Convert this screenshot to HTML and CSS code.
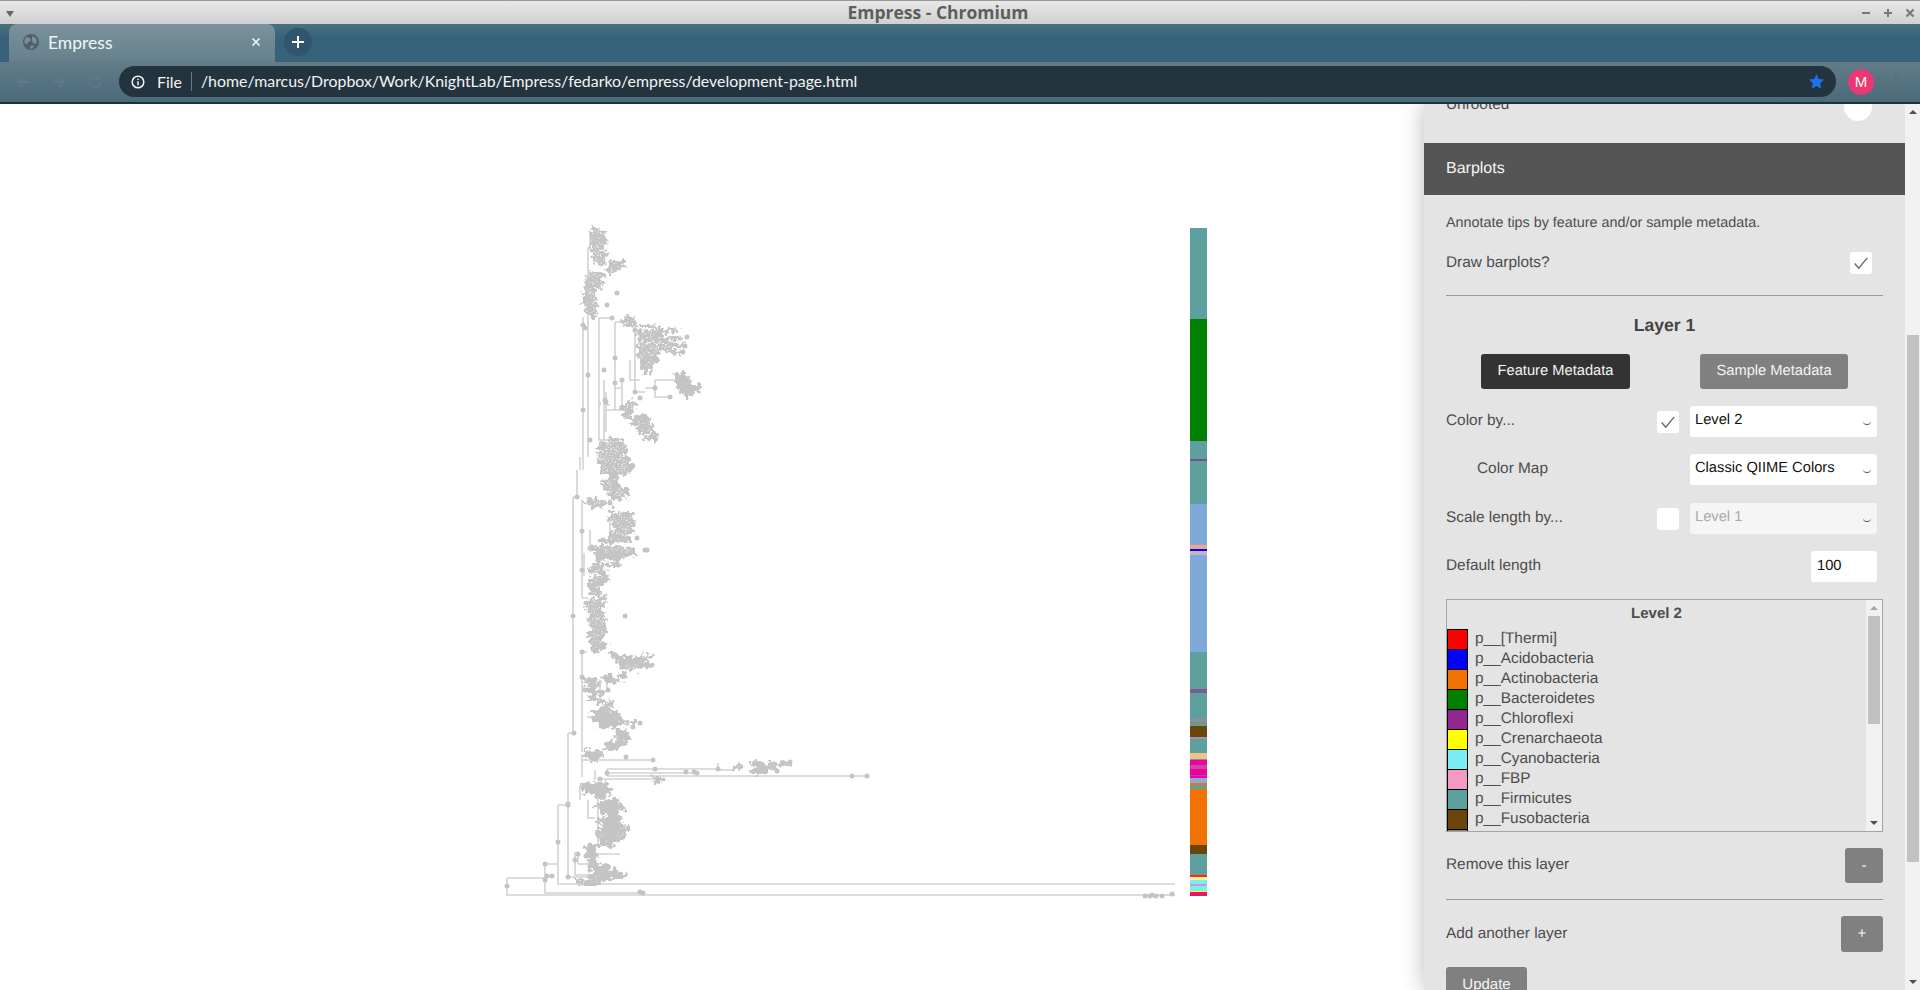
FILE: index.html
```html
<!DOCTYPE html>
<html>
<head>
  <meta charset="utf-8">
  <title>Empress - Chromium</title>
  <link rel="stylesheet" href="styles.css">
</head>
<body>
  <header class="titlebar">
    <span class="wm-menu"></span>
    <span class="wm-title">Empress - Chromium</span>
    <span class="wm-buttons">
      <svg width="12" height="12" viewBox="0 0 12 12"><path d="M2 6h8"/></svg>
      <svg width="12" height="12" viewBox="0 0 12 12"><path d="M2 6h8M6 2v8"/></svg>
      <svg width="12" height="12" viewBox="0 0 12 12"><path d="M2.5 2.5l7 7M9.5 2.5l-7 7"/></svg>
    </span>
  </header>

  <div class="tabstrip">
    <div class="tab">
      <svg class="favicon" width="16" height="16" viewBox="0 0 16 16">
        <circle cx="8" cy="8" r="8" fill="#4d5f69"/>
        <path d="M3 3l4 1 1 3-3 1-1 3-3-3zM9 2l4 2 1 5-3 1-2-3zM8 11l3 1-2 3-2-1z" fill="#7c8f99"/>
      </svg>
      <span class="tab-name">Empress</span>
      <svg class="tab-close" width="10" height="10" viewBox="0 0 10 10"><path d="M1.5 1.5l7 7M8.500 1.500l-7 7"/></svg>
    </div>
    <div class="newtab">
      <svg width="14" height="14" viewBox="0 0 14 14"><path d="M7 1v12M1 7h12"/></svg>
    </div>
  </div>

  <div class="toolbar">
    <svg class="nav" width="18" height="18" viewBox="0 0 18 18"><path d="M15 9H4M9 4L4 9l5 5"/></svg>
    <svg class="nav" width="18" height="18" viewBox="0 0 18 18"><path d="M3 9h11M9 4l5 5-5 5"/></svg>
    <svg class="nav" width="18" height="18" viewBox="0 0 18 18"><path d="M14.500 9A5.500 5.500 0 1 1 13 5.200M14 2v4h-4"/></svg>
    <div class="omnibox">
      <svg class="info" width="14" height="14" viewBox="0 0 14 14">
        <circle cx="7" cy="7" r="5.800"/>
        <path d="M7 6.200V10.300M7 3.700v1.300"/>
      </svg>
      <span class="scheme">File</span>
      <span class="url">/home/marcus/Dropbox/Work/KnightLab/Empress/fedarko/empress/development-page.html</span>
      <svg class="star" width="17" height="17" viewBox="0 0 18 18"><path d="M9 1l2.400 5.400 5.800.6-4.400 3.900 1.300 5.800L9 13.700l-5.100 3 1.300-5.800L.8 7l5.800-.6z"/></svg>
    </div>
    <div class="avatar">M</div>
    <div class="dots"><i></i><i></i><i></i></div>
  </div>

  <main class="page">
    <div class="canvas">
      <svg class="tree" width="1424" height="886" viewBox="0 104 1424 886">
        <defs>
          <!-- shakes the tip dots out of their rows -->
          <filter id="scatter" x="0" y="0" width="100%" height="100%" filterUnits="userSpaceOnUse" primitiveUnits="userSpaceOnUse">
            <feTurbulence type="fractalNoise" baseFrequency=".22" numOctaves="2" seed="7" result="n"/>
            <feDisplacementMap in="SourceGraphic" in2="n" scale="11" xChannelSelector="R" yChannelSelector="G"/>
          </filter>
        </defs>
        <!-- branches -->
        <path class="branch" d="M507 878V895H1175M507 878H545M545 864V893H643M545 864H558M558 805V884H1175M558 805H568
          M568 733V877H590M568 733H575M573 497V733M573 497H577M577 470V497M580 457V470
          M583 317V470M588 247V457M590 230V250M599 318V440H615M599 318H612M604 380V440
          M615 322V410M615 322H627M635 323V392H645M645 388H655M655 380H673M655 380V397H670
          M622 380V405M630 360V380H640M615 388H622M607 410H622M606 392V432M610 405H606M600 402V405
          M582 500V530M582 530V598M582 598H588M584 553V576M590 530V552M603 545V560M610 522V550M607 520H620
          M582 652V717M587 717H596M587 750V755H600M582 717V752M582 652H587M600 680V700M607 675V690
          M582 755V777M582 760H653M595 770V780M607 769V776M607 769H718M607 773H697M607 776H867M718 763V770H735M718 770H735M600 779H663
          M580 785V800M588 800V818H595M598 798V845M588 845V858M575 852V875H590M578 854V864M578 864H592M592 854H620
          M590 880H607M558 884H590"/>
        <!-- dense clusters of tips -->
        <path class="tips" filter="url(#scatter)" d="M593 229H600L604 233H592L590 237H603L606 241H591L592 245H604L600 249H591L594 253H607L605 257H593L596 261H606L602 265H598
          M609 268H618L622 262H612L608 271M612 266H624L627 267M610 272H617
          M592 274H603L601 278H587L585 282H602L600 286H586L584 290H595L594 294H585L586 298H596L594 302H586L583 306H595L596 310H585L589 314H596L592 318H597
          M623 321H636M627 318H633M626 325H635
          M642 326H652L660 328L661 332H640L638 336H662L666 330H680M640 340H668L680 338M639 345H675L685 346M640 349H668L672 352H683M640 353H660M639 357H656L658 360H644L642 364H654L650 367H642L644 371H650
          M676 374H684L674 378H688L675 382H692L678 386H698L701 387L680 390H698L683 394H692L686 397H690
          M627 402H632L636 406H624L622 410H634L630 414H624L627 418H638L645 417L648 420H631L634 424H650L652 428H637L640 432H655L657 437H644L648 439H655
          M610 440H620L624 444H600L597 448H625L626 452H605L598 456H622L628 460H600L597 464H630L632 468H600
          M603 472H625L630 470M606 474H620L610 478H618M603 482H615L618 486H604L606 490H628L626 494H608L610 498H625
          M584 502H600L608 504M590 499H597M588 506H605
          M612 510H616M620 513H630L633 516H610L608 520H632L634 524H612L615 528H630L632 532H612L610 536H624L626 540H608
          M600 541H626L632 538M590 548H634M596 552H638M597 555H636M600 558H620L615 562H622M605 565H618
          M594 564H600L602 568H592L590 572H604L608 578H590L592 582H606L596 586H590L592 590H602L596 594H590
          M600 596H606L603 600H590L586 604H604L601 608H587L589 612H602L604 616H590L588 620H604L606 624H590L592 628H604L607 632H590L589 636H604L600 640H590L593 644H606L602 648H592L595 652H600
          M610 653H616L612 657H622L617 661H640L650 655H656M620 658H644L646 664H618L625 668H640L646 665L655 665
          M605 677H612L608 681H616L620 674H627L625 678H614
          M584 680H596L587 684H600L590 688H595L586 692H604L592 696H597L590 700H600
          M600 702H612L606 706H614L592 712H618L593 716H620L594 720H622L598 726H618
          M600 722H636M616 731H624L614 735H628L618 739H629L606 745H626L604 749H620
          M584 752H600L586 756H602L590 760H596
          M736 767H744M752 763H764L756 767H776L750 771H768L752 773H764M770 764H788
          M653 778H664L655 782H662
          M584 784H606L580 788H608L585 792H610L595 795H607
          M596 797H602L608 801H620L598 805H622L600 809H625L602 813H618L608 817H622L596 821H618L602 825H624L600 829H628L598 833H626L596 837H624L600 841H620L596 845H610
          M586 847H595L587 851H597L586 855H594L590 859H596L588 863H598
          M590 866H610L592 870H618L594 874H626L600 877H624L590 877
          M577 881H605L586 884H596L578 888H592L576 892H584"/>
        <!-- lone nodes -->
        <path class="nodes" d="M507 886h0M545 864h0M545 880h0M558 842h0M568 805h0M573 616h0M577 497h0M583 325h0M583 410h0M588 297h0M588 375h0
          M617 293h0M607 305h0M612 318h0M615 358h0M615 383h0M635 330h0M635 392h0M687 337h0M685 346h0M683 352h0M670 397h0M655 388h0M640 398h0
          M604 370h0M606 402h0M622 380h0M605 400h0M590 440h0M585 328h0
          M582 531h0M582 570h0M592 547h0M594 590h0M598 560h0M610 503h0M645 550h0M637 538h0M618 565h0M625 616h0M647 550h0M603 540h0
          M582 652h0M582 677h0M585 690h0M608 690h0M640 723h0M633 727h0M653 760h0M626 757h0M655 769h0M718 769h0M607 773h0M697 773h0M852 776h0M867 776h0
          M686 772h0M694 772h0M777 771h0M790 762h0M784 763h0M600 779h0M574 733h0M568 804h0M575 860h0M578 854h0M590 845h0M586 856h0
          M568 877h0M552 876h0M547 876h0M590 877h0M643 893h0M640 892h0M1150 896h0M1156 896h0M1162 896h0M1152 895h0M1172 894h0M1145 896h0"/>
        <!-- barplot, layer 1 -->
        <g class="bar">
          <rect x="1190" y="228" width="17" height="91" fill="#5da09e"/>
          <rect x="1190" y="319" width="17" height="122" fill="#008000"/>
          <rect x="1190" y="441" width="17" height="63" fill="#5da09e"/>
          <rect x="1190" y="459" width="17" height="2" fill="#91278d" opacity=".7"/>
          <rect x="1190" y="504" width="17" height="148" fill="#7fa9d9"/>
          <rect x="1190" y="545" width="17" height="4" fill="#f4a582"/>
          <rect x="1190" y="549" width="17" height="2" fill="#0000ff"/>
          <rect x="1190" y="551" width="17" height="4" fill="#bbbbbb"/>
          <rect x="1190" y="652" width="17" height="126" fill="#5da09e"/>
          <rect x="1190" y="689" width="17" height="4" fill="#7d5b8f"/>
          <rect x="1190" y="719" width="17" height="2" fill="#a87fb0"/>
          <rect x="1190" y="722" width="17" height="2" fill="#8f8f5a"/>
          <rect x="1190" y="726" width="17" height="11" fill="#6b440b"/>
          <rect x="1190" y="737" width="17" height="2" fill="#a88fb0"/>
          <rect x="1190" y="753" width="17" height="6" fill="#f5c08a"/>
          <rect x="1190" y="760" width="17" height="5" fill="#f0009a"/>
          <rect x="1190" y="765" width="17" height="4" fill="#c848a8"/>
          <rect x="1190" y="769" width="17" height="9" fill="#f0009a"/>
          <rect x="1190" y="775" width="17" height="1" fill="#b040b0"/>
          <rect x="1190" y="778" width="17" height="5" fill="#8fa5dc"/>
          <rect x="1190" y="783" width="17" height="2" fill="#f27304"/>
          <rect x="1190" y="785" width="17" height="4" fill="#5da09e"/>
          <rect x="1190" y="789" width="17" height="56" fill="#f27304"/>
          <rect x="1190" y="845" width="17" height="9" fill="#6b440b"/>
          <rect x="1190" y="854" width="17" height="21" fill="#5da09e"/>
          <rect x="1190" y="875" width="17" height="2" fill="#ff2a10"/>
          <rect x="1190" y="877" width="17" height="3" fill="#f7f2a0"/>
          <rect x="1190" y="880" width="17" height="4" fill="#7cecf4"/>
          <rect x="1190" y="884" width="17" height="2" fill="#c89ad8"/>
          <rect x="1190" y="886" width="17" height="5" fill="#7cecf4"/>
          <rect x="1190" y="891" width="17" height="1" fill="#ffff00"/>
          <rect x="1190" y="892" width="17" height="4" fill="#f0106a"/>
        </g>
      </svg>
    </div>

    <aside class="panel">
      <div class="layout-row">
        <span class="unrooted">Unrooted</span>
        <span class="toggle"></span>
      </div>

      <h3 class="panel-head">Barplots</h3>

      <div class="panel-body">
        <p class="hint">Annotate tips by feature and/or sample metadata.</p>
        <div class="row draw-row">
          <span class="lbl">Draw barplots?</span>
          <span class="check on"><svg width="16" height="16" viewBox="0 0 14 14"><path d="M1.500 7.500l3.500 4L12.500 2.500"/></svg></span>
        </div>
        <hr class="rule">

        <h4 class="layer-title">Layer 1</h4>
        <div class="tabs">
          <button class="btn dark">Feature Metadata</button>
          <button class="btn">Sample Metadata</button>
        </div>

        <div class="row field">
          <span class="lbl">Color by...</span>
          <span class="check on"><svg width="16" height="16" viewBox="0 0 14 14"><path d="M1.500 7.500l3.500 4L12.500 2.500"/></svg></span>
          <div class="select"><select><option>Level 2</option></select></div>
        </div>
        <div class="row field">
          <span class="lbl indent">Color Map</span>
          <div class="select"><select><option>Classic QIIME Colors</option></select></div>
        </div>
        <div class="row field">
          <span class="lbl">Scale length by...</span>
          <span class="check"></span>
          <div class="select off"><select disabled><option>Level 1</option></select></div>
        </div>
        <div class="row field">
          <span class="lbl">Default length</span>
          <input class="num" type="text" value="100">
        </div>

        <div class="legend">
          <div class="legend-list">
            <div class="legend-title">Level 2</div>
            <div class="legend-row"><i class="swatch" style="background:#ff0000"></i>p__[Thermi]</div>
            <div class="legend-row"><i class="swatch" style="background:#0000ff"></i>p__Acidobacteria</div>
            <div class="legend-row"><i class="swatch" style="background:#f27304"></i>p__Actinobacteria</div>
            <div class="legend-row"><i class="swatch" style="background:#008000"></i>p__Bacteroidetes</div>
            <div class="legend-row"><i class="swatch" style="background:#91278d"></i>p__Chloroflexi</div>
            <div class="legend-row"><i class="swatch" style="background:#ffff00"></i>p__Crenarchaeota</div>
            <div class="legend-row"><i class="swatch" style="background:#7cecf4"></i>p__Cyanobacteria</div>
            <div class="legend-row"><i class="swatch" style="background:#f49ac2"></i>p__FBP</div>
            <div class="legend-row"><i class="swatch" style="background:#5da09e"></i>p__Firmicutes</div>
            <div class="legend-row"><i class="swatch" style="background:#6b440b"></i>p__Fusobacteria</div>
            <div class="legend-row"><i class="swatch" style="background:#808080"></i>p__GN02</div>
          </div>
          <div class="legend-scroll">
            <i class="arrow up"></i>
            <div class="thumb"></div>
            <i class="arrow down"></i>
          </div>
        </div>

        <div class="row remove-row">
          <span class="lbl">Remove this layer</span>
          <button class="btn square">-</button>
        </div>
        <hr class="rule low">
        <div class="row add-row">
          <span class="lbl">Add another layer</span>
          <button class="btn square wide">+</button>
        </div>
        <button class="btn update">Update</button>
      </div>
    </aside>

    <div class="page-scroll">
      <i class="arrow up"></i>
      <div class="thumb"></div>
      <i class="arrow down"></i>
    </div>
  </main>
</body>
</html>
```

FILE: styles.css
```css
html, body {
  margin: 0;
  height: 100%;
}

body {
  display: flex;
  flex-direction: column;
  overflow: hidden;
  font-family: "Liberation Sans", Arial, sans-serif;
  color: #4d4d4d;
  background: #fff;
}

/* window manager bar */
.titlebar {
  flex: none;
  height: 23px;
  display: flex;
  align-items: center;
  justify-content: center;
  position: relative;
  background: linear-gradient(#e8e8e8, #d0d0d0);
  border-top: 1px solid #9a9a9a;
}

.wm-menu {
  position: absolute;
  left: 6px;
  top: 10px;
  border: 4px solid transparent;
  border-top: 6px solid #666;
  border-bottom: 0;
}

.wm-title {
  font: 700 17.500px "Open Sans", sans-serif;
  color: #5e5e5e;
  margin-right: 44px;
  margin-top: -1px;
}

.wm-buttons {
  position: absolute;
  right: 4px;
  top: 6px;
  display: flex;
  gap: 10px;
}

.wm-buttons svg path {
  stroke: #777;
  stroke-width: 2;
  fill: none;
}

/* chromium */
.tabstrip {
  flex: none;
  height: 38px;
  display: flex;
  align-items: flex-end;
  gap: 9px;
  padding-left: 9px;
  background: linear-gradient(#4b717f, #37637a 35%, #37637a);
}

.tab {
  width: 266px;
  height: 38px;
  display: flex;
  align-items: center;
  box-sizing: border-box;
  padding: 0 14px 2px 14px;
  border-radius: 8px 8px 0 0;
  background: linear-gradient(#7a929c, #65808d);
}

.tab-name {
  flex: 1;
  margin-left: 9px;
  font: 17.500px Lato, sans-serif;
  color: #f2f5f6;
}

.tab-close path {
  stroke: #eef2f3;
  stroke-width: 1.600;
  fill: none;
}

.newtab {
  width: 28px;
  height: 28px;
  margin-bottom: 6px;
  border-radius: 50%;
  background: #2f566c;
  display: flex;
  align-items: center;
  justify-content: center;
}

.newtab path {
  stroke: #fff;
  stroke-width: 2;
  fill: none;
}

.toolbar {
  flex: none;
  height: 42px;
  display: flex;
  align-items: center;
  padding: 4px 22px 5px 14px;
  box-sizing: border-box;
  border-bottom: 2px solid #1c333f;
  background: linear-gradient(#637c88, #4a6a7a);
}

.nav {
  margin-right: 18px;
}

.nav path {
  stroke: #5f7986;
  stroke-width: 1.800;
  fill: none;
}

.omnibox {
  flex: 1;
  height: 31px;
  margin-left: -3px;
  display: flex;
  align-items: center;
  padding: 0 11px 0 12px;
  border-radius: 16px;
  background: #24343e;
  color: #f1f4f5;
  font: 15.900px Lato, sans-serif;
}

.info circle, .info path {
  stroke: #f1f4f5;
  stroke-width: 1.500;
  fill: none;
}

.scheme {
  margin-left: 12px;
  padding-right: 9px;
  border-right: 1px solid #6a7b85;
  line-height: 19px;
}

.url {
  flex: 1;
  margin-left: 9px;
  padding-bottom: 2px;
}

.star path {
  fill: #1a73e8;
}

.avatar {
  width: 26px;
  height: 26px;
  margin-left: 12px;
  border-radius: 50%;
  background: #ec3772;
  color: #fff;
  font-size: 15px;
  line-height: 26px;
  text-align: center;
}

.dots {
  margin-left: 20px;
  display: flex;
  flex-direction: column;
  gap: 3px;
}

.dots i {
  width: 4px;
  height: 4px;
  border-radius: 50%;
  background: #596f7b;
}

/* page */
.page {
  flex: 1;
  min-height: 0;
  display: flex;
  overflow: hidden;
}

.canvas {
  width: 1424px;
  flex: none;
}

.tree {
  display: block;
  filter: blur(.6px);
}

.branch {
  fill: none;
  stroke: #d2d2d2;
  stroke-width: 1.600;
}

.tips, .nodes {
  fill: none;
  stroke: #c4c4c4;
  stroke-linecap: round;
  stroke-linejoin: round;
}

.tips {
  stroke-width: 4.700;
  stroke-dasharray: 0 4.300;
}

.nodes {
  stroke-width: 5;
}

/* side panel */
.panel {
  width: 481px;
  flex: none;
  background: #e4e4e4;
  box-shadow: 0 0 22px rgba(0, 0, 0, .28);
  overflow: hidden;
  font-size: 15.400px;
  text-rendering: geometricPrecision;
}

.layout-row {
  display: flex;
  align-items: center;
  justify-content: space-between;
  height: 28px;
  margin-top: -11px;
  padding: 0 33px 0 22px;
}

.unrooted {
  margin-bottom: 4px;
}

.toggle {
  width: 28px;
  height: 28px;
  border-radius: 50%;
  background: #fff;
}

.panel-head {
  margin: 22px 0 0;
  height: 52px;
  padding-left: 22px;
  display: flex;
  align-items: center;
  background: #555;
  color: #f4f4f4;
  font-size: 16px;
  font-weight: 400;
}

.panel-body {
  padding: 0 22px;
}

.hint {
  margin: 18px 0 0;
  line-height: 20px;
  font-size: 14.350px;
}

.row {
  display: flex;
  align-items: center;
}

.lbl {
  flex: 1;
  margin-bottom: 1px;
}

.indent {
  padding-left: 31px;
}

.draw-row {
  margin-top: 19px;
  padding-right: 11px;
}

.check {
  width: 22px;
  height: 22px;
  border-radius: 3px;
  background: #fff;
  display: flex;
  align-items: center;
  justify-content: center;
}

.check path {
  stroke: #666;
  stroke-width: 1.200;
  fill: none;
}

.rule {
  border: 0;
  height: 1px;
  margin: 21px 0 0;
  background: #999;
}

.rule.low {
  margin-top: 16px;
}

.layer-title {
  margin: 19px 0 0;
  line-height: 20px;
  text-align: center;
  font-size: 17.600px;
  color: #444;
}

.tabs {
  display: flex;
  gap: 70px;
  margin-top: 19px;
  padding-left: 35px;
}

.btn {
  height: 35px;
  border: 0;
  border-radius: 3px;
  padding: 0 0 1px;
  background: #808080;
  color: #f4f4f4;
  font: 14.700px "Liberation Sans", Arial, sans-serif;
  text-rendering: geometricPrecision;
}

.tabs .btn {
  width: 148px;
}

.tabs .btn.dark {
  width: 149px;
  background: #333;
}

.field {
  height: 31px;
  margin-top: 17px;
}

.field + .field + .field {
  margin-top: 18px;
}

.field + .field + .field + .field {
  margin-top: 17px;
}

.field .check {
  margin-right: 11px;
}

.select {
  width: 187px;
  height: 31px;
  margin-right: 6px;
  position: relative;
}

.select select {
  width: 100%;
  height: 100%;
  border: 0;
  border-radius: 3px;
  padding: 0 0 3px 5px;
  background: #fff;
  color: #111;
  font: 14.700px "Liberation Sans", Arial, sans-serif;
  text-rendering: geometricPrecision;
  appearance: none;
}

.select::after {
  content: "";
  position: absolute;
  right: 6px;
  top: 15px;
  width: 8px;
  height: 3px;
  border-bottom: 1px solid #555;
  border-radius: 0 0 6px 6px;
}

.select.off select {
  background: #f5f5f5;
  color: #aaa;
  opacity: 1;
}

.num {
  width: 66px;
  height: 31px;
  margin-right: 6px;
  box-sizing: border-box;
  border: 0;
  border-radius: 3px;
  padding: 0 0 1px 6px;
  background: #fff;
  color: #111;
  font: 14.700px "Liberation Sans", Arial, sans-serif;
  text-rendering: geometricPrecision;
}

.legend {
  height: 233px;
  margin-top: 17px;
  box-sizing: border-box;
  border: 1px solid #a4a4a4;
  display: flex;
  overflow: hidden;
}

.legend-list {
  flex: 1;
}

.legend-title {
  height: 29px;
  line-height: 27px;
  text-align: center;
  font-weight: 700;
  font-size: 15px;
}

.legend-row {
  height: 20px;
  box-sizing: border-box;
  padding-bottom: 1px;
  display: flex;
  align-items: center;
  gap: 7px;
  white-space: nowrap;
}

.swatch {
  width: 19px;
  height: 19px;
  margin-top: 1px;
  flex: none;
  border: 1px solid #000;
}

.legend-scroll {
  width: 16px;
  flex: none;
  position: relative;
  background: #f1f1f1;
}

.legend-scroll .thumb {
  position: absolute;
  left: 2px;
  right: 2px;
  top: 16px;
  height: 108px;
  background: #c1c1c1;
}

.arrow {
  position: absolute;
  left: 50%;
  margin-left: -4px;
  border: 4px solid transparent;
  border-top: 0;
}

.arrow.up {
  top: 6px;
  border-bottom: 4px solid #a3a3a3;
}

.arrow.down {
  bottom: 6px;
  border-bottom: 0;
  border-top: 4px solid #505050;
}

.remove-row {
  margin-top: 16px;
}

.square {
  width: 38px;
  font-size: 15px;
}

.square.wide {
  width: 42px;
  height: 36px;
}

.add-row {
  margin-top: 16px;
}

.update {
  display: block;
  width: 81px;
  margin-top: 15px;
  font-size: 15px;
}

.page-scroll {
  width: 15px;
  flex: none;
  position: relative;
  background: #f1f1f1;
}

.page-scroll .thumb {
  position: absolute;
  left: 2px;
  right: 1px;
  top: 231px;
  height: 527px;
  background: #c1c1c1;
}

.page-scroll .arrow.up {
  border-bottom-color: #505050;
}
```
